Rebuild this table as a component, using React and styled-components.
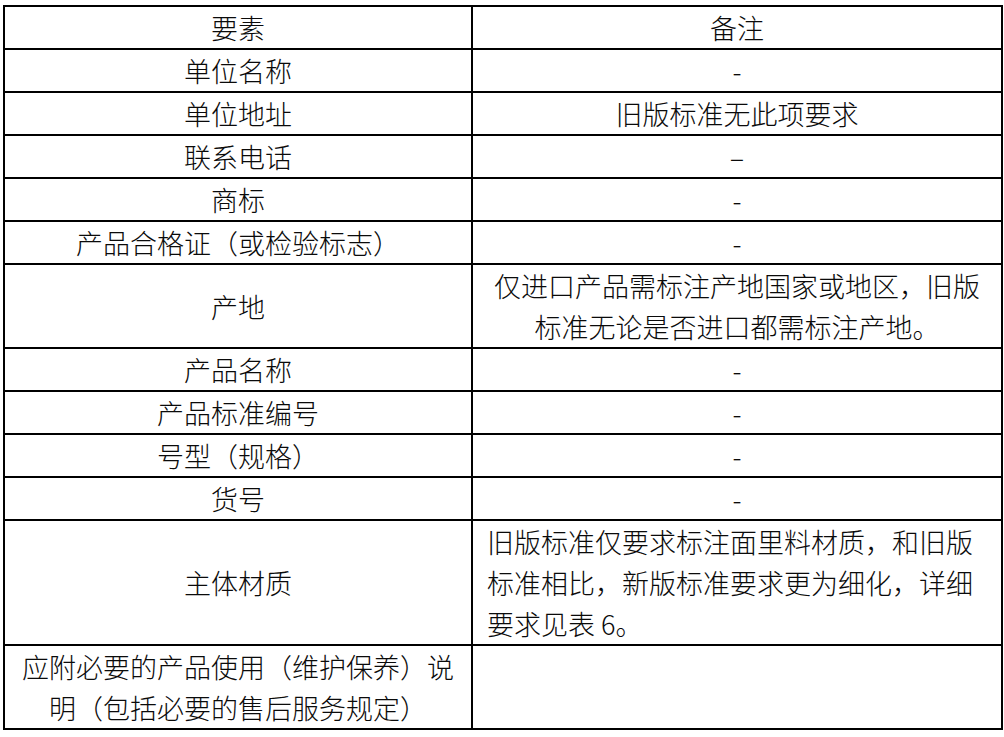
import React from "react";
import styled, { createGlobalStyle } from "styled-components";

const Global = createGlobalStyle`
  html, body { margin: 0; padding: 0; background: #ffffff; }
  body { padding: 5px 0 0 3px; }
`;

const Table = styled.table`
  border-collapse: collapse;
  table-layout: fixed;
  width: 998px;
  font-family: "Noto Sans CJK SC", "Noto Sans", sans-serif;
  font-size: 27px;
  font-weight: 300;
  line-height: 41px;
  color: #0a0a0a;
`;

const Col = styled.col`
  width: ${(p) => p.$w}px;
`;

const Cell = styled.td`
  border: 2px solid #000000;
  padding: 0 14px;
  vertical-align: middle;
  text-align: ${(p) => p.$align || "center"};
  word-break: break-all;
`;

const HeadCell = styled(Cell).attrs({ as: "th" })`
  font-weight: 300;
`;

const rows = [
  ["单位名称", "-"],
  ["单位地址", "旧版标准无此项要求"],
  ["联系电话", "–"],
  ["商标", "-"],
  ["产品合格证（或检验标志）", "-"],
  ["产地", "仅进口产品需标注产地国家或地区，旧版标准无论是否进口都需标注产地。"],
  ["产品名称", "-"],
  ["产品标准编号", "-"],
  ["号型（规格）", "-"],
  ["货号", "-"],
  ["主体材质", "旧版标准仅要求标注面里料材质，和旧版标准相比，新版标准要求更为细化，详细要求见表 6。", "left"],
  ["应附必要的产品使用（维护保养）说明（包括必要的售后服务规定）", ""],
];

export default function App() {
  return (
    <>
      <Global />
      <Table>
        <colgroup>
          <Col $w={468} />
          <Col $w={530} />
        </colgroup>
        <thead>
          <tr>
            <HeadCell>要素</HeadCell>
            <HeadCell>备注</HeadCell>
          </tr>
        </thead>
        <tbody>
          {rows.map(([a, b, align], i) => (
            <tr key={i}>
              <Cell>{a}</Cell>
              <Cell $align={align}>{b}</Cell>
            </tr>
          ))}
        </tbody>
      </Table>
    </>
  );
}
